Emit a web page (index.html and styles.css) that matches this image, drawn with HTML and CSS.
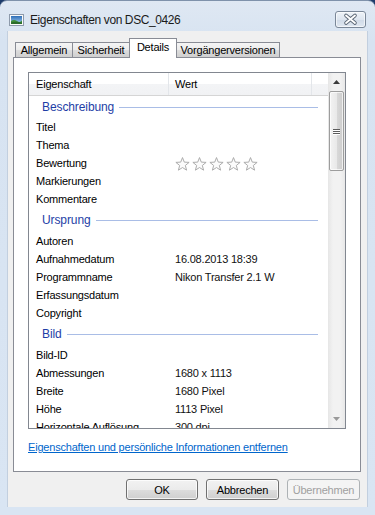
FILE: index.html
```html
<!DOCTYPE html>
<html>
<head>
<meta charset="utf-8">
<link rel="stylesheet" href="styles.css">
</head>
<body>
<div class="window">
  <div class="titlebar">
    <svg class="app-icon" width="15" height="12" viewBox="0 0 15 12">
      <defs>
        <linearGradient id="sky" x1="0" y1="0" x2="0" y2="1">
          <stop offset="0" stop-color="#2f6fb8"/>
          <stop offset="1" stop-color="#a9d0ef"/>
        </linearGradient>
      </defs>
      <rect x="0.5" y="0.5" width="14" height="11" fill="#fafafa" stroke="#8d9aab"/>
      <rect x="2" y="2" width="11" height="8" fill="url(#sky)"/>
      <path d="M2 7 Q5 5 8 7 T13 6.5 L13 10 L2 10 Z" fill="#3f8f3a"/>
      <path d="M2 8.5 Q6 7 13 8.5 L13 10 L2 10 Z" fill="#2a6b2a"/>
    </svg>
    <span class="title">Eigenschaften von DSC_0426</span>
    <div class="close">
      <svg width="29" height="15" viewBox="0 0 29 15">
        <path d="M10 3.5 L19 11 M19 3.5 L10 11" stroke="#5b6675" stroke-width="3.6" stroke-linecap="round"/>
        <path d="M10 3.5 L19 11 M19 3.5 L10 11" stroke="#ffffff" stroke-width="1.8" stroke-linecap="round"/>
      </svg>
    </div>
  </div>
  <div class="client">
    <div class="tabs">
      <div class="tab t1">Allgemein</div>
      <div class="tab t2">Sicherheit</div>
      <div class="tab t3 active">Details</div>
      <div class="tab t4">Vorgängerversionen</div>
    </div>
    <div class="panel">
      <div class="listview">
        <div class="lv-main">
          <div class="lv-header">
            <div class="hcell c1">Eigenschaft</div>
            <div class="hcell c2">Wert</div>
            <div class="hcell c3"></div>
          </div>
          <div class="lv-body">
            <div class="group first"><span>Beschreibung</span></div>
            <div class="row"><span class="k">Titel</span><span class="v"></span></div>
            <div class="row"><span class="k">Thema</span><span class="v"></span></div>
            <div class="row"><span class="k">Bewertung</span><span class="v stars">
              <svg width="15" height="14" viewBox="0 0 14 13"><polygon points="7,0.5 8.65,4.73 13.18,4.99 9.66,7.87 10.82,12.26 7,9.8 3.18,12.26 4.34,7.87 0.82,4.99 5.35,4.73" fill="#fbfbfb" stroke="#a9a9a9" stroke-width="0.9" stroke-linejoin="round"/></svg>
              <svg width="15" height="14" viewBox="0 0 14 13"><polygon points="7,0.5 8.65,4.73 13.18,4.99 9.66,7.87 10.82,12.26 7,9.8 3.18,12.26 4.34,7.87 0.82,4.99 5.35,4.73" fill="#fbfbfb" stroke="#a9a9a9" stroke-width="0.9" stroke-linejoin="round"/></svg>
              <svg width="15" height="14" viewBox="0 0 14 13"><polygon points="7,0.5 8.65,4.73 13.18,4.99 9.66,7.87 10.82,12.26 7,9.8 3.18,12.26 4.34,7.87 0.82,4.99 5.35,4.73" fill="#fbfbfb" stroke="#a9a9a9" stroke-width="0.9" stroke-linejoin="round"/></svg>
              <svg width="15" height="14" viewBox="0 0 14 13"><polygon points="7,0.5 8.65,4.73 13.18,4.99 9.66,7.87 10.82,12.26 7,9.8 3.18,12.26 4.34,7.87 0.82,4.99 5.35,4.73" fill="#fbfbfb" stroke="#a9a9a9" stroke-width="0.9" stroke-linejoin="round"/></svg>
              <svg width="15" height="14" viewBox="0 0 14 13"><polygon points="7,0.5 8.65,4.73 13.18,4.99 9.66,7.87 10.82,12.26 7,9.8 3.18,12.26 4.34,7.87 0.82,4.99 5.35,4.73" fill="#fbfbfb" stroke="#a9a9a9" stroke-width="0.9" stroke-linejoin="round"/></svg>
            </span></div>
            <div class="row"><span class="k">Markierungen</span><span class="v"></span></div>
            <div class="row"><span class="k">Kommentare</span><span class="v"></span></div>
            <div class="group"><span>Ursprung</span></div>
            <div class="row"><span class="k">Autoren</span><span class="v"></span></div>
            <div class="row"><span class="k">Aufnahmedatum</span><span class="v">16.08.2013 18:39</span></div>
            <div class="row"><span class="k">Programmname</span><span class="v">Nikon Transfer 2.1 W</span></div>
            <div class="row"><span class="k">Erfassungsdatum</span><span class="v"></span></div>
            <div class="row"><span class="k">Copyright</span><span class="v"></span></div>
            <div class="group"><span>Bild</span></div>
            <div class="row"><span class="k">Bild-ID</span><span class="v"></span></div>
            <div class="row"><span class="k">Abmessungen</span><span class="v">1680 x 1113</span></div>
            <div class="row"><span class="k">Breite</span><span class="v">1680 Pixel</span></div>
            <div class="row"><span class="k">Höhe</span><span class="v">1113 Pixel</span></div>
            <div class="row"><span class="k">Horizontale Auflösung</span><span class="v">300 dpi</span></div>
          </div>
        </div>
        <div class="scrollbar">
          <div class="sb-btn">
            <svg width="7" height="4" viewBox="0 0 7 4"><polygon points="3.5,0 7,4 0,4" fill="#3c3c3c"/></svg>
          </div>
          <div class="sb-thumb">
            <div class="grip"></div>
            <div class="grip"></div>
            <div class="grip"></div>
          </div>
          <div class="sb-track"></div>
          <div class="sb-btn">
            <svg width="7" height="4" viewBox="0 0 7 4"><polygon points="0,0 7,0 3.5,4" fill="#9a9a9a"/></svg>
          </div>
        </div>
      </div>
      <a class="link" href="#">Eigenschaften und persönliche Informationen entfernen</a>
    </div>
    <div class="buttons">
      <div class="btn b-ok">OK</div>
      <div class="btn b-cancel">Abbrechen</div>
      <div class="btn b-apply disabled">Übernehmen</div>
    </div>
  </div>
</div>
</body>
</html>
```

FILE: styles.css
```css
* {
  box-sizing: border-box;
}

html, body {
  margin: 0;
  padding: 0;
  background: #1d3c6b;
}

body {
  width: 375px;
  height: 515px;
  overflow: hidden;
  font-family: "Liberation Sans", Arial, sans-serif;
  font-size: 11px;
  letter-spacing: -0.2px;
  color: #000;
}

.window {
  width: 375px;
  height: 515px;
  background: linear-gradient(#dfe8f3, #d7e3f1 40px, #d9e5f3);
  border-top: 1px solid #7f92ab;
  border-radius: 7px 7px 0 0;
  display: flex;
  flex-direction: column;
}

.titlebar {
  height: 30px;
  display: flex;
  align-items: flex-start;
  padding-left: 9px;
}

.app-icon {
  margin-top: 13px;
  flex: none;
}

.title {
  margin-left: 6px;
  margin-top: 11px;
  line-height: 16px;
  font-size: 12px;
  letter-spacing: -0.4px;
  color: #1a1a1a;
}

.close {
  margin-left: auto;
  margin-top: 10px;
  margin-right: 9px;
  width: 31px;
  height: 17px;
  border: 1px solid #7a8798;
  border-radius: 3px;
  background: linear-gradient(#eef3f8, #dde5ef 50%, #d0dae7 51%, #dfe7f1);
  box-shadow: inset 0 0 0 1px rgba(255,255,255,0.6);
  display: flex;
  align-items: center;
  justify-content: center;
}

.client {
  margin: 0 7px;
  height: 476px;
  background: #f0f0f0;
  border-left: 1px solid #c2cfdf;
  border-right: 1px solid #c2cfdf;
  display: flex;
  flex-direction: column;
}

.tabs {
  margin-top: 7px;
  padding-left: 7px;
  height: 19px;
  display: flex;
  align-items: flex-end;
}

.tab {
  height: 15px;
  border: 1px solid #898c95;
  border-bottom: none;
  border-right: none;
  background: linear-gradient(#f5f5f5, #ebebeb 50%, #dddddd 51%, #cfcfcf);
  text-align: center;
  line-height: 14px;
  flex: none;
}

.t1 { width: 57px; }
.t2 { width: 57px; }
.t3 { width: 48px; }
.t4 { width: 103px; border-right: 1px solid #898c95; }

.tab.active {
  height: 20px;
  margin-bottom: -1px;
  background: #ffffff;
  position: relative;
  z-index: 2;
  border-right: 1px solid #898c95;
  line-height: 17px;
}

.tab.active + .tab {
  border-left: none;
}

.panel {
  margin-left: 5px;
  width: 348px;
  height: 415px;
  border: 1px solid #898c95;
  background: #ffffff;
  padding: 14px 0 0 14px;
  display: flex;
  flex-direction: column;
  align-items: flex-start;
  flex: none;
}

.listview {
  width: 318px;
  height: 357px;
  border: 1px solid #828790;
  display: flex;
  flex: none;
}

.lv-main {
  flex: 1;
  display: flex;
  flex-direction: column;
  overflow: hidden;
}

.lv-header {
  height: 23px;
  border-bottom: 1px solid #d5d5d5;
  background: linear-gradient(#ffffff, #ffffff 50%, #f3f4f6 51%, #f1f2f4);
  display: flex;
  flex: none;
}

.hcell {
  display: flex;
  align-items: center;
  height: 22px;
}

.c1 {
  width: 140px;
  padding-left: 7px;
  border-right: 1px solid #e3e6ea;
}

.c2 {
  width: 143px;
  padding-left: 6px;
  border-right: 1px solid #e3e6ea;
}

.c3 {
  flex: 1;
}

.lv-body {
  flex: 1;
  overflow: hidden;
}

.row {
  height: 18px;
  display: flex;
  align-items: center;
}

.k {
  width: 146px;
  padding-left: 7px;
  white-space: nowrap;
  flex: none;
}

.v {
  white-space: nowrap;
  color: #111;
}

.stars {
  display: flex;
  gap: 2px;
  margin-top: 1px;
}

.group {
  height: 24px;
  display: flex;
  align-items: center;
  padding-left: 13px;
  padding-right: 10px;
  color: #1e3ea6;
  font-size: 12px;
  letter-spacing: -0.1px;
}

.group.first {
  height: 22px;
}

.group::after {
  content: "";
  flex: 1;
  height: 1px;
  margin-left: 5px;
  background: #a9bde6;
}

.scrollbar {
  width: 17px;
  flex: none;
  display: flex;
  flex-direction: column;
  background: linear-gradient(90deg, #e6e6e6, #f2f2f2 30%, #f2f2f2 70%, #e8e8e8);
}

.sb-btn {
  height: 18px;
  display: flex;
  align-items: center;
  justify-content: center;
  flex: none;
}

.sb-thumb {
  margin: 0 1px;
  height: 80px;
  border: 1px solid #9d9d9d;
  border-radius: 2px;
  background: linear-gradient(90deg, #f3f3f3, #e9e9e9 50%, #d9d9d9 51%, #cdcdcd);
  box-shadow: inset 0 0 0 1px rgba(255,255,255,0.7);
  display: flex;
  flex-direction: column;
  align-items: center;
  justify-content: center;
  gap: 1px;
  flex: none;
}

.grip {
  width: 7px;
  height: 1px;
  background: #5c5c5c;
  box-shadow: 0 1px 0 #ffffff;
}

.sb-track {
  flex: 1;
}

.link {
  margin-top: 11px;
  line-height: 14px;
  color: #0066cc;
  text-decoration: underline;
  white-space: nowrap;
}

.buttons {
  margin-top: 7px;
  padding-right: 7px;
  display: flex;
  justify-content: flex-end;
  gap: 8px;
}

.btn {
  height: 21px;
  border: 1px solid #707070;
  border-radius: 3px;
  background: linear-gradient(#f2f2f2, #ebebeb 50%, #dddddd 51%, #cfcfcf);
  box-shadow: inset 0 0 0 1px rgba(255,255,255,0.75);
  display: flex;
  align-items: center;
  justify-content: center;
  flex: none;
}

.b-ok { width: 72px; }
.b-cancel { width: 73px; }
.b-apply { width: 73px; }

.btn.disabled {
  border-color: #adb2b5;
  background: #f4f4f4;
  color: #a0a0a0;
  box-shadow: none;
}
```
